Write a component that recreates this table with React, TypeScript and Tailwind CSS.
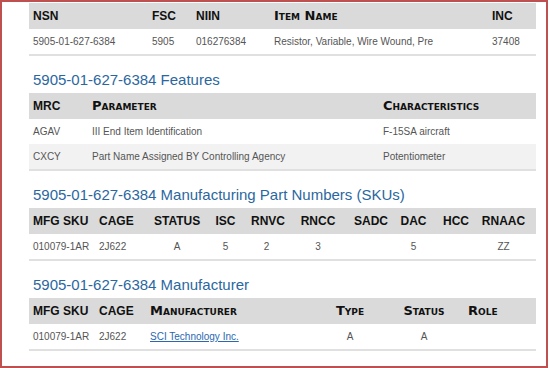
import { ReactNode } from "react";

type Cell = {
  text: ReactNode;
  center?: boolean;
  caps?: boolean;
};

const headClass =
  "flex h-[26px] items-center bg-[#dadada] text-[12px] font-bold text-[#111]";
const rowClass = "flex h-[25px] items-center text-[10px] text-[#555]";

const TableHead = ({ cols, cells }: { cols: string; cells: Cell[] }) => (
  <div className={`grid ${cols} ${headClass}`}>
    {cells.map((c, i) => (
      <div
        key={i}
        className={
          c.caps
            ? "px-1 font-['DejaVu_Sans',sans-serif] text-[13px] font-bold [font-variant:small-caps]"
            : c.center
              ? "px-1 text-center"
              : "px-1"
        }
      >
        {c.text}
      </div>
    ))}
  </div>
);

const TableRow = ({
  cols,
  cells,
  striped,
}: {
  cols: string;
  cells: Cell[];
  striped?: boolean;
}) => (
  <div className={`grid ${cols} ${rowClass} ${striped ? "bg-[#f2f2f2]" : ""}`}>
    {cells.map((c, i) => (
      <div key={i} className={c.center ? "px-1 text-center" : "px-1"}>
        {c.text}
      </div>
    ))}
  </div>
);

const Heading = ({ children }: { children: ReactNode }) => (
  <h2 className="mt-[14px] mb-[3px] px-1 text-[15px] leading-[20px] text-[#2b679f]">
    {children}
  </h2>
);

const Rule = () => <div className="h-[2px] bg-[#e0e0e0]" />;

const nsnCols = "grid-cols-[119px_44px_78px_218px_48px]";
const featCols = "grid-cols-[59px_291px_157px]";
const skuCols =
  "grid-cols-[66px_55px_54px_43px_39px_64px_38px_51px_32px_65px]";
const mfrCols = "grid-cols-[66px_51px_170px_68px_80px_72px]";

const App = () => {
  return (
    <div className="h-[368px] w-[550px] bg-white font-['Liberation_Sans',Arial,sans-serif]">
      <div className="h-[368px] w-[548px] border-2 border-[#bf5050] pl-[27px] pt-px">
        <div className="w-[507px]">
          <TableHead
            cols={nsnCols}
            cells={[
              { text: "NSN" },
              { text: "FSC" },
              { text: "NIIN" },
              { text: "Item Name", caps: true },
              { text: "INC" },
            ]}
          />
          <TableRow
            cols={nsnCols}
            cells={[
              { text: "5905-01-627-6384" },
              { text: "5905" },
              { text: "016276384" },
              { text: "Resistor, Variable, Wire Wound, Pre" },
              { text: "37408" },
            ]}
          />
          <Rule />

          <Heading>5905-01-627-6384 Features</Heading>
          <TableHead
            cols={featCols}
            cells={[
              { text: "MRC" },
              { text: "Parameter", caps: true },
              { text: "Characteristics", caps: true },
            ]}
          />
          <TableRow
            cols={featCols}
            cells={[
              { text: "AGAV" },
              { text: "III End Item Identification" },
              { text: "F-15SA aircraft" },
            ]}
          />
          <TableRow
            cols={featCols}
            striped
            cells={[
              { text: "CXCY" },
              { text: "Part Name Assigned BY Controlling Agency" },
              { text: "Potentiometer" },
            ]}
          />
          <Rule />

          <Heading>5905-01-627-6384 Manufacturing Part Numbers (SKUs)</Heading>
          <TableHead
            cols={skuCols}
            cells={[
              { text: "MFG SKU" },
              { text: "CAGE" },
              { text: "STATUS", center: true },
              { text: "ISC", center: true },
              { text: "RNVC", center: true },
              { text: "RNCC", center: true },
              { text: "SADC", center: true },
              { text: "DAC", center: true },
              { text: "HCC", center: true },
              { text: "RNAAC", center: true },
            ]}
          />
          <TableRow
            cols={skuCols}
            cells={[
              { text: "010079-1AR" },
              { text: "2J622" },
              { text: "A", center: true },
              { text: "5", center: true },
              { text: "2", center: true },
              { text: "3", center: true },
              { text: "", center: true },
              { text: "5", center: true },
              { text: "", center: true },
              { text: "ZZ", center: true },
            ]}
          />
          <Rule />

          <Heading>5905-01-627-6384 Manufacturer</Heading>
          <TableHead
            cols={mfrCols}
            cells={[
              { text: "MFG SKU" },
              { text: "CAGE" },
              { text: "Manufacturer", caps: true },
              { text: <span className="block text-center">Type</span>, caps: true },
              { text: <span className="block text-center">Status</span>, caps: true },
              { text: "Role", caps: true },
            ]}
          />
          <TableRow
            cols={mfrCols}
            cells={[
              { text: "010079-1AR" },
              { text: "2J622" },
              {
                text: (
                  <a href="#" className="text-[#2a68b0] underline">
                    SCI Technology Inc.
                  </a>
                ),
              },
              { text: "A", center: true },
              { text: "A", center: true },
              { text: "" },
            ]}
          />
          <Rule />
        </div>
      </div>
    </div>
  );
};

export default App;
